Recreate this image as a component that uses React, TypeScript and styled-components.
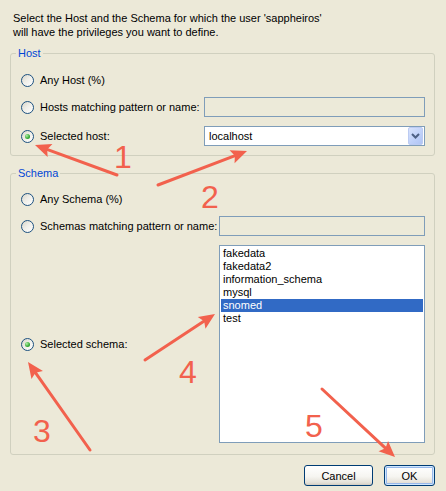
import React from "react";
import styled, { createGlobalStyle } from "styled-components";

const GlobalStyle = createGlobalStyle`
  html, body {
    margin: 0;
    padding: 0;
    background: #ECE9D8;
  }
  body {
    font-family: "Liberation Sans", Arial, sans-serif;
    font-size: 11px;
    color: #000;
  }
`;

const Page = styled.div`
  position: relative;
  width: 446px;
  height: 491px;
  box-sizing: border-box;
  padding: 11px 11px 0 10px;
  display: flex;
  flex-direction: column;
  background: #ECE9D8;
  overflow: hidden;
`;

const Intro = styled.p`
  margin: 0 0 7px 3px;
  line-height: 14px;
`;

const Group = styled.fieldset<{ $gapTop?: number }>`
  margin: ${(p) => p.$gapTop ?? 0}px 0 0 0;
  padding: 0;
  min-width: 0;
  border: 1px solid #d0d0bf;
  border-radius: 3px;
`;

const Legend = styled.legend`
  margin-left: 5px;
  padding: 0 2px;
  color: #0046d5;
  line-height: 14px;
  font-size: 11px;
`;

const GroupBody = styled.div<{ $labelWidth: number; $top: number; $bottom: number }>`
  display: grid;
  grid-template-columns: ${(p) => p.$labelWidth}px 1fr;
  row-gap: 7px;
  align-items: center;
  padding: ${(p) => p.$top}px 9px ${(p) => p.$bottom}px 10px;
`;

const Option = styled.label<{ $spaced?: boolean }>`
  display: flex;
  align-items: center;
  gap: 6px;
  height: 20px;
  margin-top: ${(p) => (p.$spaced ? 2 : 0)}px;
  white-space: nowrap;
`;

const Radio = styled.span<{ $checked?: boolean }>`
  flex: none;
  width: 13px;
  height: 13px;
  box-sizing: border-box;
  border-radius: 50%;
  border: 1px solid #1c5180;
  background: linear-gradient(135deg, #d8d5c8 0%, #efeee8 45%, #ffffff 100%);
  display: grid;
  place-items: center;
  &::after {
    content: "";
    width: 5px;
    height: 5px;
    border-radius: 50%;
    background: ${(p) =>
      p.$checked
        ? "radial-gradient(circle at 35% 35%, #b4eeaa 0%, #3cb03c 55%, #1b7d1b 100%)"
        : "transparent"};
  }
`;

const Cell = styled.div<{ $spaced?: boolean }>`
  min-width: 0;
  margin-top: ${(p) => (p.$spaced ? 2 : 0)}px;
`;

const TextBox = styled.div`
  height: 20px;
  box-sizing: border-box;
  border: 1px solid #7f9db9;
  background: #ecead9;
`;

const Combo = styled.div`
  height: 20px;
  box-sizing: border-box;
  border: 1px solid #7f9db9;
  background: #fff;
  display: flex;
  align-items: center;
  justify-content: space-between;
  padding: 0 1px 0 4px;
`;

const DropButton = styled.span`
  width: 15px;
  height: 18px;
  box-sizing: border-box;
  border: 1px solid #bccbf2;
  border-radius: 2px;
  background: linear-gradient(135deg, #d9e3fc 0%, #c2d3fa 50%, #b0c4f4 100%);
  display: grid;
  place-items: center;
`;

const ListBox = styled.ul`
  list-style: none;
  margin: 0;
  height: 198px;
  box-sizing: border-box;
  border: 1px solid #7f9db9;
  background: #fff;
  padding: 1px;
`;

const ListItem = styled.li<{ $selected?: boolean }>`
  height: 13px;
  line-height: 13px;
  padding-left: 2px;
  background: ${(p) => (p.$selected ? "#316ac5" : "transparent")};
  color: ${(p) => (p.$selected ? "#fff" : "#000")};
`;

const Buttons = styled.div`
  display: flex;
  justify-content: flex-end;
  gap: 11px;
  margin-top: 10px;
`;

const Button = styled.button<{ $width: number; $default?: boolean }>`
  width: ${(p) => p.$width}px;
  height: 21px;
  box-sizing: border-box;
  padding: 0;
  border: 1px solid #003c74;
  border-radius: 3px;
  font-family: "Liberation Sans", Arial, sans-serif;
  font-size: 11px;
  color: #000;
  background: linear-gradient(to bottom, #ffffff 0%, #f6f5f1 55%, #e6e3da 85%, #d6d0c5 100%);
  box-shadow: ${(p) =>
    p.$default
      ? "inset 0 0 0 1px #cee7ff, inset 0 0 0 2px #98b8ea"
      : "inset 0 -1px 0 #d6d0c5"};
`;

const Overlay = styled.svg`
  position: absolute;
  left: 0;
  top: 0;
  width: 446px;
  height: 491px;
  pointer-events: none;
`;

const Num = styled.text`
  font-family: "Liberation Sans", Arial, sans-serif;
  font-size: 32px;
  fill: #f2614d;
`;

const RED = "#f2614d";

type ArrowProps = { x1: number; y1: number; x2: number; y2: number };

function Arrow({ x1, y1, x2, y2 }: ArrowProps) {
  const dx = x2 - x1;
  const dy = y2 - y1;
  const d = Math.hypot(dx, dy);
  const ux = dx / d;
  const uy = dy / d;
  const len = 16;
  const half = 7;
  const bx = x2 - ux * len;
  const by = y2 - uy * len;
  const px = -uy;
  const py = ux;
  const pts = [
    [x2, y2],
    [bx + px * half, by + py * half],
    [bx + ux * 3, by + uy * 3],
    [bx - px * half, by - py * half],
  ]
    .map((p) => p.join(","))
    .join(" ");
  return (
    <g>
      <line
        x1={x1}
        y1={y1}
        x2={bx + ux * 4}
        y2={by + uy * 4}
        stroke={RED}
        strokeWidth={3}
        strokeLinecap="round"
      />
      <polygon points={pts} fill={RED} />
    </g>
  );
}

function Chevron() {
  return (
    <svg width="9" height="6" viewBox="0 0 9 6">
      <path d="M1 1 L4.5 4.5 L8 1" fill="none" stroke="#4d6185" strokeWidth="2" />
    </svg>
  );
}

const schemas = ["fakedata", "fakedata2", "information_schema", "mysql", "snomed", "test"];

export default function App() {
  return (
    <>
      <GlobalStyle />
      <Page>
        <Intro>
          Select the Host and the Schema for which the user 'sappheiros'
          <br />
          will have the privileges you want to define.
        </Intro>

        <Group>
          <Legend>Host</Legend>
          <GroupBody $labelWidth={183} $top={10} $bottom={9}>
            <Option>
              <Radio />
              Any Host (%)
            </Option>
            <Cell />
            <Option>
              <Radio />
              Hosts matching pattern or name:
            </Option>
            <Cell>
              <TextBox />
            </Cell>
            <Option $spaced>
              <Radio $checked />
              Selected host:
            </Option>
            <Cell $spaced>
              <Combo>
                <span>localhost</span>
                <DropButton>
                  <Chevron />
                </DropButton>
              </Combo>
            </Cell>
          </GroupBody>
        </Group>

        <Group $gapTop={10}>
          <Legend>Schema</Legend>
          <GroupBody $labelWidth={198} $top={9} $bottom={11}>
            <Option>
              <Radio />
              Any Schema (%)
            </Option>
            <Cell />
            <Option>
              <Radio />
              Schemas matching pattern or name:
            </Option>
            <Cell>
              <TextBox />
            </Cell>
            <Option $spaced>
              <Radio $checked />
              Selected schema:
            </Option>
            <Cell $spaced>
              <ListBox>
                {schemas.map((s) => (
                  <ListItem key={s} $selected={s === "snomed"}>
                    {s}
                  </ListItem>
                ))}
              </ListBox>
            </Cell>
          </GroupBody>
        </Group>

        <Buttons>
          <Button $width={69}>Cancel</Button>
          <Button $width={51} $default>
            OK
          </Button>
        </Buttons>

        <Overlay viewBox="0 0 446 491">
          <Arrow x1={117} y1={175} x2={35} y2={145} />
          <Arrow x1={158} y1={185} x2={247} y2={151} />
          <Arrow x1={90} y1={450} x2={28} y2={362} />
          <Arrow x1={145} y1={360} x2={215} y2={314} />
          <Arrow x1={322} y1={389} x2={395} y2={457} />
          <Num x={123} y={168} textAnchor="middle">1</Num>
          <Num x={210} y={208} textAnchor="middle">2</Num>
          <Num x={42} y={442} textAnchor="middle">3</Num>
          <Num x={188} y={383} textAnchor="middle">4</Num>
          <Num x={314} y={437} textAnchor="middle">5</Num>
        </Overlay>
      </Page>
    </>
  );
}
